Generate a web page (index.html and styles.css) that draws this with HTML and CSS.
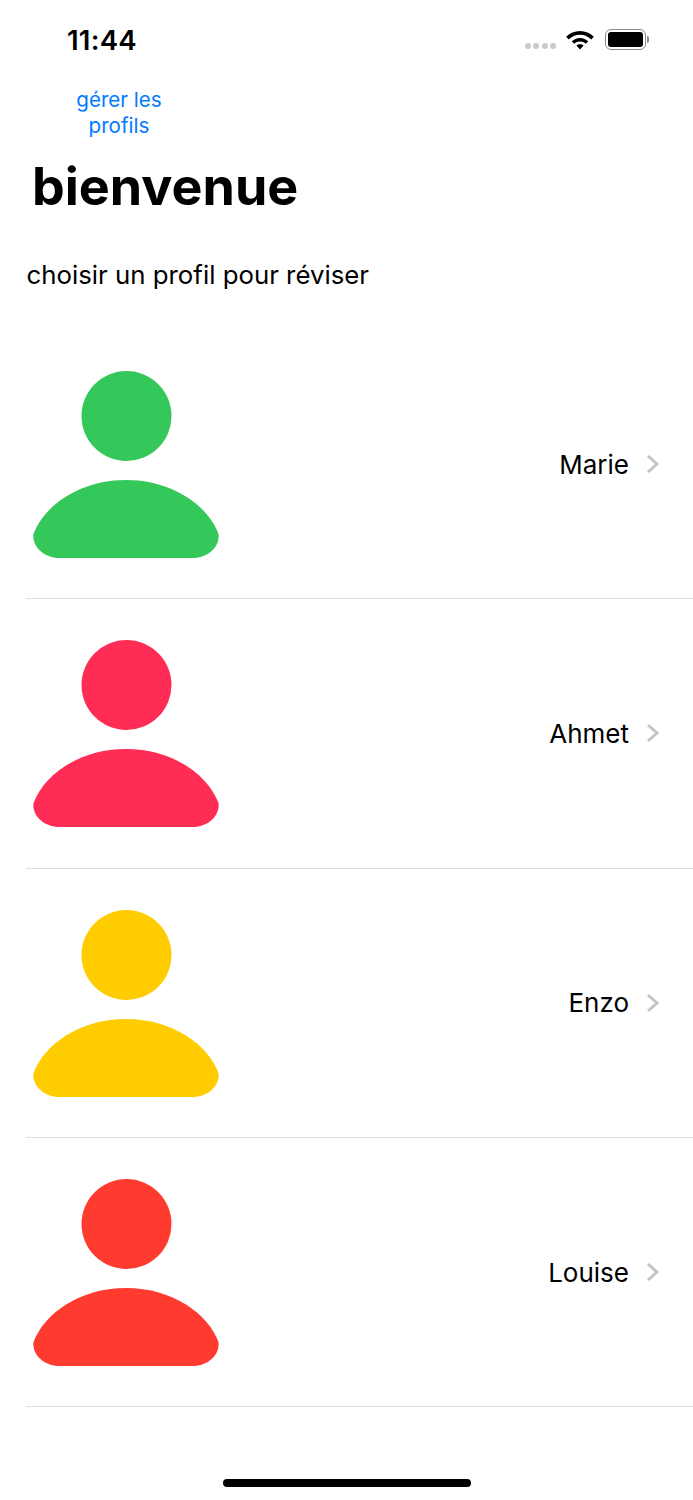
FILE: index.html
```html
<!DOCTYPE html>
<html lang="fr">
<head>

    <meta charset="utf-8">

    <title>bienvenue</title>

    <link rel="stylesheet" href="styles.css">

</head>
<body>

    <div class="status">
        <span class="time">11:44</span>
        <div class="status_icons">
            <div class="dots"><i></i><i></i><i></i><i></i></div>
            <svg class="wifi" width="28" height="22" viewBox="0 0 28 22">
                <path d="M14 2C19.500 2 24 4.200 27.800 7.800L25.300 10.500C22.200 7.500 18.500 5.700 14 5.700C9.500 5.700 5.800 7.500 2.700 10.500L0.200 7.800C4 4.200 8.500 2 14 2Z"/>
                <path d="M14 8.900C17.200 8.900 20 10.200 22.200 12.200L19.800 14.800C18.200 13.400 16.300 12.500 14 12.500C11.700 12.500 9.800 13.400 8.200 14.800L5.800 12.200C8 10.200 10.800 8.900 14 8.900Z"/>
                <path d="M14 15.200C15.400 15.200 16.600 15.700 17.600 16.600L14 20.600L10.400 16.600C11.400 15.700 12.600 15.200 14 15.200Z"/>
            </svg>
            <div class="battery">
                <div class="battery_shell"><div class="battery_level"></div></div>
                <div class="battery_cap"></div>
            </div>
        </div>
    </div>

    <div class="manage">
        <a class="manage_link" href="#">gérer les profils</a>
    </div>

    <h1 class="title">bienvenue</h1>

    <p class="subtitle">choisir un profil pour réviser</p>

    <div class="profiles">

        <a class="profile green" href="#">
            <svg class="avatar" width="186" height="188" viewBox="0 0 186 188">
                <circle cx="93.500" cy="45" r="45"/>
                <path d="M93 109C46 109 11 135 0.500 163C-1 174 9 187 27 187H159C177 187 187 174 185.500 163C175 135 140 109 93 109Z"/>
            </svg>
            <span class="name">Marie</span>
            <svg class="chevron" width="14" height="20" viewBox="0 0 14 20"><path d="M2 2L11 10L2 18"/></svg>
        </a>

        <a class="profile pink" href="#">
            <svg class="avatar" width="186" height="188" viewBox="0 0 186 188">
                <circle cx="93.500" cy="45" r="45"/>
                <path d="M93 109C46 109 11 135 0.500 163C-1 174 9 187 27 187H159C177 187 187 174 185.500 163C175 135 140 109 93 109Z"/>
            </svg>
            <span class="name">Ahmet</span>
            <svg class="chevron" width="14" height="20" viewBox="0 0 14 20"><path d="M2 2L11 10L2 18"/></svg>
        </a>

        <a class="profile yellow" href="#">
            <svg class="avatar" width="186" height="188" viewBox="0 0 186 188">
                <circle cx="93.500" cy="45" r="45"/>
                <path d="M93 109C46 109 11 135 0.500 163C-1 174 9 187 27 187H159C177 187 187 174 185.500 163C175 135 140 109 93 109Z"/>
            </svg>
            <span class="name">Enzo</span>
            <svg class="chevron" width="14" height="20" viewBox="0 0 14 20"><path d="M2 2L11 10L2 18"/></svg>
        </a>

        <a class="profile red" href="#">
            <svg class="avatar" width="186" height="188" viewBox="0 0 186 188">
                <circle cx="93.500" cy="45" r="45"/>
                <path d="M93 109C46 109 11 135 0.500 163C-1 174 9 187 27 187H159C177 187 187 174 185.500 163C175 135 140 109 93 109Z"/>
            </svg>
            <span class="name">Louise</span>
            <svg class="chevron" width="14" height="20" viewBox="0 0 14 20"><path d="M2 2L11 10L2 18"/></svg>
        </a>

    </div>

    <div class="home_bar"></div>

</body>
</html>
```

FILE: styles.css
```css
html, body {
    width: 693px;
    height: 1500px;
    margin: 0;
    overflow: hidden;
}
body {
    position: relative;
    background: #fff;
    color: #000;
    font-family: Inter, "Liberation Sans", sans-serif;
}
a {
    color: inherit;
    text-decoration: none;
}
/* status bar */
.status {
    display: flex;
    justify-content: space-between;
    align-items: center;
    height: 79px;
    padding: 0 44px 0 67px;
    box-sizing: border-box;
}
.time {
    font-size: 27.500px;
    font-weight: 600;
    letter-spacing: 0.2px;
}
.status_icons {
    display: flex;
    align-items: center;
}
.dots {
    display: flex;
    gap: 2.500px;
    margin-right: 10px;
    margin-top: 12px;
}
.dots i {
    width: 6px;
    height: 6px;
    border-radius: 50%;
    background: #c9c9c9;
}
.wifi {
    margin-right: 11px;
}
.battery {
    display: flex;
    align-items: center;
}
.battery_shell {
    width: 41px;
    height: 21px;
    padding: 2px;
    border: 1.500px solid #8a8a8a;
    border-radius: 6px;
    box-sizing: border-box;
}
.battery_level {
    width: 100%;
    height: 100%;
    border-radius: 3px;
    background: #000;
}
.battery_cap {
    width: 2px;
    height: 7px;
    margin-left: 1px;
    border-radius: 0 2px 2px 0;
    background: #8a8a8a;
}
/* header */
.manage {
    width: 96px;
    margin-left: 71px;
    margin-top: 8px;
    text-align: center;
}
.manage_link {
    display: block;
    font-size: 20.600px;
    line-height: 26px;
    color: #007aff;
}
.title {
    margin: 13px 0 0 32px;
    font-size: 52px;
    line-height: 70px;
    font-weight: 700;
}
.subtitle {
    margin: 37px 0 0 26.500px;
    font-size: 25.800px;
    line-height: 32px;
}
/* profiles */
.profiles {
    margin: 39px 0 0 26px;
}
.profile {
    display: flex;
    align-items: center;
    height: 269.330px;
    padding: 0 33px 0 7px;
    border-bottom: 1px solid #dcdcde;
    box-sizing: border-box;
}
.avatar {
    flex: none;
    margin-top: 2px;
}
.name {
    margin-left: auto;
    font-size: 26px;
    margin-right: 17px;
}
.chevron {
    flex: none;
    fill: none;
    stroke: #c4c4c7;
    stroke-width: 3;
}
.green .avatar { fill: #34c759; }
.pink .avatar { fill: #ff2d55; }
.yellow .avatar { fill: #ffcc00; }
.red .avatar { fill: #ff3b30; }
/* home indicator */
.home_bar {
    position: absolute;
    left: 223px;
    bottom: 13px;
    width: 248px;
    height: 8px;
    border-radius: 4px;
    background: #000;
}
```
